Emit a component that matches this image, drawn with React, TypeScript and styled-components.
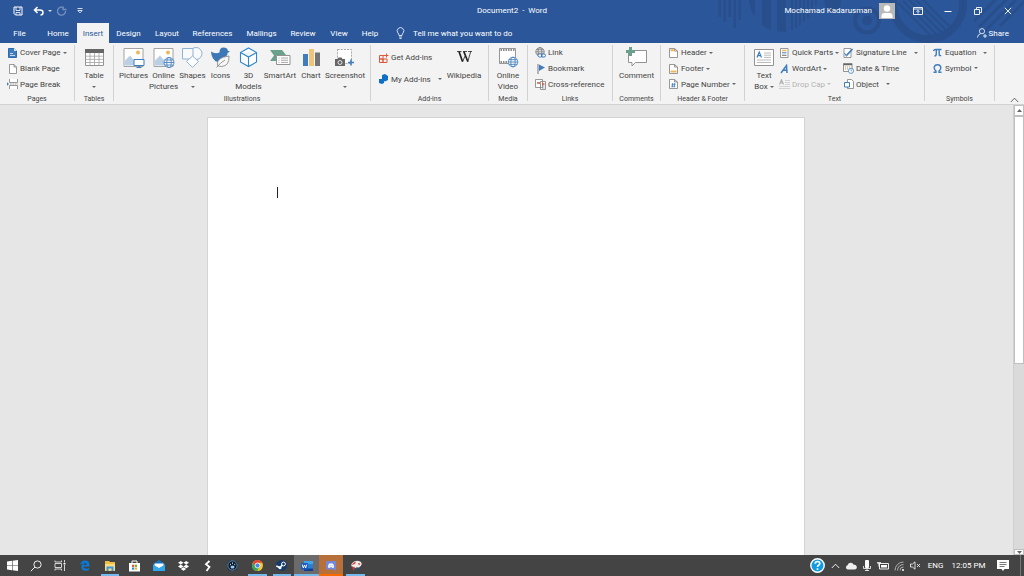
import React from "react";
import styled, { createGlobalStyle } from "styled-components";

const Global = createGlobalStyle`
  * { box-sizing: border-box; }
  body { margin: 0; background: #e6e6e6; }
  body, button, input { font-family: Roboto, "Open Sans", sans-serif; font-size: 8px; line-height: 11px; }
  button { border: 0; padding: 0; margin: 0; background: none; color: inherit; cursor: pointer; white-space: nowrap; }
  svg { display: block; flex: none; }
`;

const Window = styled.div`
  height: 100vh;
  display: flex;
  flex-direction: column;
  overflow: hidden;
  color: #444;
`;

/* ---------- Header ---------- */
const Header = styled.header`
  position: relative;
  flex: none;
  background: #2b579a;
  color: #fff;
`;
const Decoration = styled.svg`
  position: absolute;
  top: 0;
  right: 0;
`;
const TitleBar = styled.div`
  position: relative;
  height: 23px;
  padding-bottom: 2px;
  display: grid;
  grid-template-columns: 1fr auto 1fr;
  align-items: center;
`;
const QuickAccess = styled.div`
  display: flex;
  align-items: center;
  padding-left: 8px;
`;
const QuickButton = styled.button<{ $w: number; $dim?: boolean }>`
  width: ${(p) => p.$w}px;
  height: 20px;
  display: flex;
  align-items: center;
  justify-content: center;
  opacity: ${(p) => (p.$dim ? 0.35 : 1)};
`;
const Title = styled.h1`
  margin: 0;
  font-size: 8px;
  font-weight: 400;
  line-height: 11px;
  white-space: pre;
`;
const WindowTools = styled.div`
  display: flex;
  align-items: center;
  justify-content: flex-end;
  padding-right: 1px;
`;
const Account = styled.button`
  display: flex;
  align-items: center;
  gap: 7px;
  margin-right: 8px;
`;
const WindowButton = styled.button`
  width: 30px;
  height: 20px;
  display: flex;
  align-items: center;
  justify-content: center;
`;
const TabRow = styled.nav`
  position: relative;
  height: 20px;
  display: flex;
  align-items: stretch;
`;
const Tab = styled.button<{ $w: number; $active?: boolean }>`
  width: ${(p) => p.$w}px;
  background: ${(p) => (p.$active ? "#f3f3f3" : "transparent")};
  color: ${(p) => (p.$active ? "#2b579a" : "#fff")};
`;
const TellMe = styled.label`
  flex: 1;
  display: flex;
  align-items: center;
  gap: 8px;
  padding-left: 12px;
`;
const TellMeInput = styled.input`
  width: 140px;
  border: 0;
  padding: 0;
  background: transparent;
  color: #fff;
  outline: none;
  &::placeholder { color: #fff; opacity: 1; }
`;
const Share = styled.button`
  display: flex;
  align-items: center;
  gap: 2px;
  padding-right: 15px;
`;

/* ---------- Ribbon ---------- */
const Ribbon = styled.section`
  flex: none;
  height: 62px;
  display: flex;
  align-items: stretch;
  background: #f3f3f3;
  border-bottom: 1px solid #d2d2d2;
`;
const Group = styled.div<{ $w: number; $pad?: number }>`
  width: ${(p) => p.$w}px;
  flex: none;
  margin: 2px 0 3px;
  padding-left: ${(p) => p.$pad ?? 0}px;
  border-right: 1px solid #d2d2d2;
  display: flex;
  flex-direction: column;
  justify-content: space-between;
`;
const GroupBody = styled.div`
  height: 47px;
  display: flex;
`;
const GroupLabel = styled.div<{ $pad?: number }>`
  margin: 0 0 -3px -${(p) => p.$pad ?? 0}px;
  text-align: center;
  font-size: 7px;
  line-height: 9px;
`;
const BigButton = styled.button<{ $w: number }>`
  width: ${(p) => p.$w}px;
  display: flex;
  flex-direction: column;
  align-items: center;
  justify-content: flex-start;
  padding-top: 2px;
`;
const BigIcon = styled.span`
  flex: none;
  height: 23px;
  display: flex;
  align-items: flex-start;
`;
const BigText = styled.span`
  flex: none;
  text-align: center;
  display: flex;
  align-items: center;
  gap: 2px;
  height: 11px;
`;
const Column = styled.div<{ $w?: number; $inset?: number }>`
  width: ${(p) => (p.$w ? p.$w + "px" : "auto")};
  padding: ${(p) => p.$inset ?? 0}px 0;
  display: flex;
  flex-direction: column;
`;
const SmallButton = styled.button`
  flex: 1;
  display: flex;
  align-items: center;
  gap: 2px;
  &:disabled { color: #b4b4b4; }
`;
const SmallIcon = styled.span`
  width: 11px;
  display: flex;
  justify-content: center;
`;
const Arrow = styled.span<{ $far?: boolean }>`
  width: 0;
  height: 0;
  margin-left: ${(p) => (p.$far ? 5 : 0)}px;
  border: 2px solid transparent;
  border-top-color: currentColor;
  border-bottom: 0;
  opacity: 0.8;
`;
const Collapse = styled.button`
  margin-left: auto;
  align-self: flex-end;
  padding: 0 5px 1px 0;
`;

/* ---------- Document ---------- */
const Workspace = styled.main`
  flex: 1;
  min-height: 0;
  display: flex;
  background: #e6e6e6;
`;
const Canvas = styled.div`
  flex: 1;
  display: flex;
  justify-content: center;
  padding: 12px 1px 0 0;
`;
const Page = styled.article`
  width: 59%;
  background: #fff;
  border: 1px solid #d4d4d4;
  border-bottom: 0;
  padding: 69px;
`;
const Caret = styled.span`
  display: block;
  width: 1px;
  height: 11px;
  background: #222;
`;
const ScrollBar = styled.div`
  width: 11px;
  display: flex;
  flex-direction: column;
  background: #dadada;
  border-left: 1px solid #cfcfcf;
  overflow: hidden;
`;
const ScrollButton = styled.button<{ $down?: boolean }>`
  height: ${(p) => (p.$down ? 6 : 11)}px;
  flex: none;
  margin-top: ${(p) => (p.$down ? "auto" : 0)};
  background: #fff;
  border: 1px solid #c0c0c0;
  display: flex;
  justify-content: center;
  align-items: center;
`;
const Thumb = styled.div`
  height: 55%;
  background: #fff;
  border: 1px solid #c0c0c0;
`;

/* ---------- Taskbar ---------- */
const TaskBar = styled.footer`
  flex: none;
  height: 21px;
  display: flex;
  align-items: stretch;
  background: #444;
  color: #fff;
`;
const TaskButton = styled.button<{ $open?: boolean; $bg?: string; $line?: string }>`
  width: 24px;
  display: flex;
  align-items: center;
  justify-content: center;
  background: ${(p) => p.$bg ?? "transparent"};
  position: relative;
  &::after {
    content: "";
    display: ${(p) => (p.$open ? "block" : "none")};
    position: absolute;
    bottom: 0;
    left: ${(p) => (p.$bg ? 0 : 3)}px;
    right: ${(p) => (p.$bg ? 0 : 3)}px;
    height: 2px;
    background: ${(p) => p.$line ?? "#76b9ed"};
  }
`;
const Pinned = styled.div`
  width: 295px;
  margin-left: 1px;
  display: grid;
  grid-template-columns: repeat(12, 1fr);
  & > button { width: auto; }
`;
const Tray = styled.div`
  margin-left: auto;
  display: flex;
  align-items: center;
`;
const TrayButton = styled.button<{ $w?: number }>`
  width: ${(p) => p.$w ?? 16}px;
  height: 21px;
  display: flex;
  align-items: center;
  justify-content: center;
`;
const HelpButton = styled(TrayButton)`
  margin-right: 1px;
`;
const ShowDesktop = styled.button`
  width: 4px;
  height: 21px;
  margin-left: 4px;
  border-left: 1px solid #777;
`;

/* ---------- Icons ---------- */
const Svg = ({ w, h, children }: { w: number; h: number; children: React.ReactNode }) => (
  <svg width={w} height={h} viewBox={`0 0 ${w} ${h}`} fill="none" aria-hidden="true">{children}</svg>
);
const blue = "#3f7dbd";
const grey = "#7f7f7f";

const HeaderArt = () => (
  <Decoration width="312" height="43" viewBox="712 0 312 43" fill="none" aria-hidden="true">
    <g fill="#284f8b">
      <path d="M718.500 0h2.500v17h-2.500zM723.500 0h2.500v22h-2.500zM728.500 0h2.500v17h-2.500zM733.500 0h2.500v28h-2.500zM738.500 0h2.500v20h-2.500z" />
      <path d="M749 0h6v17q-5-7-6-17zM762 0h9v30q-5-1-9-6zM777 0h9v32q-5 0-9-1zM791 0h2v30h-2zM795 0h2v28h-2zM799 0h2v25h-2zM803 0h2v22h-2zM807 0h2v18h-2zM811 0h2v12h-2zM815 0h2v6h-2z" />
      <circle cx="867" cy="20.500" r="5" />
      <path d="M824 0h17v4q-2 8-9 8t-8-12z" />
    </g>
    <g stroke="#284f8b">
      <circle cx="867" cy="20.500" r="12" strokeWidth="4" />
      <circle cx="928" cy="4" r="35" strokeWidth="8" />
      <path d="M898 3l34 34M903 1l34 34M908-1l34 34M914-2l32 32M921-2l28 28" strokeWidth="2" />
      <path d="M974 21l22-22M979 27l28-28M984 32l33-33M1000 26l27-27" strokeWidth="3" />
    </g>
  </Decoration>
);
const SaveIcon = () => <Svg w={10} h={10}><path d="M1 1h8v8H2.500L1 7.500z" stroke="#fff" /><path d="M3 1v3.500h4V1M3 9V6.500h4V9" stroke="#fff" strokeWidth=".8" /></Svg>;
const UndoIcon = () => <Svg w={11} h={10}><path d="M4.500 1L1.500 4l3 3M2 4h5q3 0 3 2.500T7.500 9" stroke="#fff" strokeWidth="1.500" /></Svg>;
const RedoIcon = () => <Svg w={10} h={10}><path d="M7 2a4 4 0 101.500 3M6 .500v3h3.500" stroke="#fff" strokeWidth="1.300" /></Svg>;
const CustomizeIcon = () => <Svg w={6} h={6}><path d="M.500.500h5M.800 2.500h4.400L3 4.800z" stroke="#fff" strokeWidth=".8" /></Svg>;
const Avatar = () => (
  <Svg w={16} h={16}>
    <path d="M0 0h16v16H0z" fill="#b9b9b9" />
    <circle cx="8" cy="5.500" r="3.200" fill="#fff" />
    <path d="M2.500 15v-2q0-3 3-3h5q3 0 3 3v2z" fill="#fff" />
  </Svg>
);
const DisplayIcon = () => <Svg w={10} h={8}><path d="M.500.500h9v7h-9zM.500 2h9M5 6.500v-3M3.500 4.800L5 3.300l1.500 1.500" stroke="#fff" strokeWidth=".9" /></Svg>;
const MinIcon = () => <Svg w={8} h={8}><path d="M.500 4.500h7" stroke="#fff" /></Svg>;
const RestoreIcon = () => <Svg w={8} h={8}><path d="M.500 2.500h5v5h-5zM2.500 2V.500h5v5H6" stroke="#fff" strokeWidth=".9" /></Svg>;
const CloseIcon = () => <Svg w={8} h={8}><path d="M.800.800l6.400 6.400M7.200.800L.800 7.200" stroke="#fff" strokeWidth=".9" /></Svg>;
const BulbIcon = () => <Svg w={9} h={12}><path d="M3 8.500Q3 7 1.800 5.800a3.300 3.300 0 115.400 0Q6 7 6 8.500zM3 10h3M3.500 11.500h2" stroke="#fff" strokeWidth=".8" /></Svg>;
const ShareIcon = () => <Svg w={10} h={10}><circle cx="5" cy="3.200" r="2.600" stroke="#fff" strokeWidth=".8" /><path d="M.500 9.500q0-3 3-3.800M6 8h4M8 6v4" stroke="#fff" strokeWidth=".8" /></Svg>;

const CoverIcon = () => <Svg w={9} h={10}><path d="M.500.500h5.500l2.500 2.500v6.500h-8z" fill={blue} stroke="#2b6cae" /><path d="M6 0v3h3z" fill="#d6e4f2" /><path d="M2 5.500h3M2 7.500h5" stroke="#fff" strokeWidth=".7" /></Svg>;
const BlankIcon = () => <Svg w={8} h={10}><path d="M.500.500h4.500l2.500 2.500v6.500h-7zM5 .500v2.500h2.500" fill="#fff" stroke={grey} strokeWidth=".8" /></Svg>;
const BreakIcon = () => <Svg w={11} h={10}><path d="M2.500 0v3.500h8V0M2.500 10V6.500h8V10" fill="#fff" stroke={grey} strokeWidth=".8" /><path d="M0 3.200L2 5 0 6.800z" fill={blue} /><path d="M3 5h8" stroke={grey} strokeDasharray="1.500 1" strokeWidth=".7" /></Svg>;
const TableIcon = () => <Svg w={19} h={20}><path d="M.500 2.500h18v16H.500z" fill="#fff" stroke="#929292" /><path d="M0 2h19v4H0z" fill="#666" /><path d="M5 6v12.500M9.500 6v12.500M14 6v12.500M.500 9.200h18M.500 12.400h18M.500 15.500h18" stroke="#a2a2a2" strokeWidth=".8" /></Svg>;
const Photo = () => <><path d="M1 1.500h19v18H1z" fill="#fff" stroke="#a2a2a2" /><path d="M2 18.500v-5l5-5 6 7v3z" fill="#b9cfe5" /><circle cx="15" cy="5.500" r="2" fill="#ecb85c" /></>;
const PicturesIcon = () => <Svg w={22} h={21}><Photo /><path d="M11 12.500h10v6H11z" fill="#fff" stroke={blue} /><path d="M13.500 20.500h5M16 18.500v2" stroke={blue} /></Svg>;
const Globe = ({ x, y, r, c = blue }: { x: number; y: number; r: number; c?: string }) => (
  <g transform={`translate(${x} ${y})`} stroke={c} strokeWidth=".8"><circle r={r} fill="#f3f3f3" /><ellipse rx={r * 0.45} ry={r} /><path d={`M${-r} 0H${r}M${-r * 0.85} ${-r * 0.5}H${r * 0.85}M${-r * 0.85} ${r * 0.5}H${r * 0.85}`} /></g>
);
const OnlineIcon = () => <Svg w={22} h={21}><Photo /><Globe x={16} y={15.5} r={5} /></Svg>;
const ShapesIcon = () => <Svg w={21} h={21}><circle cx="14" cy="6.500" r="6" fill="#f8fafc" stroke="#8fb1d6" /><path d="M.500 1.500h10.500v10.500H.500z" fill="#f8fafc" stroke="#8fb1d6" /><path d="M10.500 9l6 5.500-6 5.800-6-5.800z" fill="#fff" stroke="#8fb1d6" /></Svg>;
const DuckIcon = () => <Svg w={19} h={21}><path d="M0 4.500Q4 7.500 8.500 5.500 8.500.500 12.500.500q4 0 4.300 3.300L19 4.500l-2.500 1.500Q17 8 14.500 9.500 8 11 6.500 15 .500 13 0 4.500z" fill="#3b78b5" /><path d="M6.500 18.500Q5 10.500 18 9q.5 10-7.500 10.500-2 0-4-1zM5.500 20.500q4-5 8.500-7.500" fill="#f8f8f8" stroke={grey} strokeWidth=".8" /></Svg>;
const CubeIcon = () => <Svg w={19} h={21}><path d="M9.500 1l8 4.500v9.500l-8 4.500-8-4.500V5.500zM1.500 5.500l8 4.500 8-4.500M9.500 10v9.500" fill="#fff" stroke="#2b87cf" strokeWidth="1.100" /></Svg>;
const SmartIcon = () => <Svg w={21} h={20}><path d="M0 3h12l4 5-4 6H0l4-5.500z" fill="#6aa18c" /><path d="M6.500 8.500h13.500v9H6.500z" fill="#fff" stroke="#929292" /><path d="M8.500 11h1M11 11h7M8.500 13.200h1M11 13.200h7M8.500 15.400h1M11 15.400h7" stroke="#929292" strokeWidth=".8" /></Svg>;
const ChartIcon = () => <Svg w={17} h={20}><path d="M0 7h5v12H0z" fill={blue} /><path d="M6 2h5v17H6z" fill="#ebc67a" /><path d="M12 5.500h5V19h-5z" fill="#737373" /></Svg>;
const ScreenshotIcon = () => <Svg w={20} h={21}><path d="M2.500 2.500h14v14h-14z" fill="#fff" stroke="#929292" strokeDasharray="2 1.200" strokeWidth=".8" /><path d="M0 12h2.500l1-1.500h3L7.500 12H10v7H0z" fill="#666" /><circle cx="5" cy="15.500" r="2" stroke="#fff" strokeWidth=".8" /><path d="M13 15.500h6M16 12.500v6" stroke={blue} strokeWidth="1.600" /></Svg>;
const GetIcon = () => <Svg w={10} h={10}><path d="M.500 2.500h3.500v3.500H.500zM.500 6h3.500v3.500H.500zM4 6h4v3.500H4zM4 2.500h2M7.500.500v4M5.500 2.500h4" stroke="#e0593a" strokeWidth="1" /></Svg>;
const MyIcon = () => <Svg w={10} h={10}><path d="M3 1l3-1 3 2v4L6 7.500 3 6z" fill="#0f6fc6" /><path d="M0 5h4l1 1.500V9L3 10 0 9z" fill="#0f6fc6" /></Svg>;
const VideoIcon = () => <Svg w={21} h={21}><path d="M1.500 1.500h16v15h-16z" fill="#fff" stroke={grey} strokeWidth=".8" /><path d="M2.500 3h14M2.500 15h8" stroke="#666" strokeWidth="1.500" strokeDasharray="1.500 1" /><Globe x={15} y={15} r={4.8} /></Svg>;
const LinkIcon = () => <Svg w={11} h={11}><Globe x={5} y={4.800} r={4.2} c="#777" /><path d="M3 8.500q0-1.500 1.500-1.500h2v3h-2Q3 10 3 8.500zM10.500 8.500q0-1.500-1.500-1.500H7v3h2q1.500 0 1.500-1.500z" fill="#fff" stroke={blue} /></Svg>;
const BookmarkIcon = () => <Svg w={10} h={10}><path d="M2 0v10" stroke="#777" /><path d="M3 .500l6 3-6 3.500z" fill={blue} /></Svg>;
const CrossIcon = () => <Svg w={11} h={11}><path d="M.500.500h7v8h-7zM5.500 2.500h5v8h-5z" fill="#fff" stroke={grey} strokeWidth=".8" /><path d="M2 4h3M7 5h2.500" stroke="#d45137" strokeWidth="1.300" /><path d="M7 7h2.500M7 9h2.500" stroke={grey} strokeWidth=".7" /></Svg>;
const CommentIcon = () => <Svg w={22} h={21}><path d="M2.500 3.500h18v12h-11L6 19v-3.500H2.500z" fill="#fff" stroke="#929292" /><path d="M0 4.500h9M4.500 0v9" stroke="#6aa18c" strokeWidth="3" /></Svg>;
const PageIcon = ({ kind }: { kind: "top" | "bottom" | "num" }) => (
  <Svg w={9} h={10}><path d="M.500.500h5l3 2.500v6.500h-8zM5.500.500v2.500h3" fill="#fff" stroke={grey} strokeWidth=".8" />
    {kind === "top" && <path d="M1.500 1.200h4v2h-4z" fill="#ecb85c" />}
    {kind === "bottom" && <path d="M1.500 6.500h6v2h-6z" fill="#ecb85c" />}
    {kind === "num" && <path d="M3.700 4l-.5 4.500M5.700 4l-.5 4.500M2.500 5.300h4M2.300 7.200h4" stroke={blue} strokeWidth=".8" />}
  </Svg>
);
const TextBoxIcon = () => <Svg w={20} h={20}><path d="M.500 2.500h19v16H.500z" fill="#fff" stroke="#929292" /><path d="M3 10.500L5.200 5l2.300 5.500M3.800 8.700h3" stroke={blue} strokeWidth="1.200" /><path d="M10 6h7M10 8.200h7M10 10.400h7M3 13h14M3 15.500h14" stroke="#aaa" strokeWidth=".8" /></Svg>;
const QuickIcon = () => <Svg w={9} h={10}><path d="M.500.500h7.500v9H.500z" fill="#fff" stroke={grey} strokeWidth=".8" /><path d="M2 2.500h4.500" stroke="#ecb85c" strokeWidth="1.500" /><path d="M2 4.800h4.500" stroke={blue} /><path d="M2 7.300h4.500" stroke={grey} strokeWidth="1.200" /></Svg>;
const WordArtIcon = () => <Svg w={9} h={10}><path d="M1 9L6.500 1.500 7 9M3 6.200h4" stroke={blue} strokeWidth="1.500" /></Svg>;
const DropIcon = () => <Svg w={11} h={10}><path d="M.500 5.500L2.500.800l2 4.700M1.200 4h2.600" stroke="#b0b0b0" strokeWidth="1.100" /><path d="M6 1.500h5M6 3.500h5M6 5.500h5M0 7.500h11M0 9.500h11" stroke="#c4c4c4" strokeWidth=".7" /></Svg>;
const SignIcon = () => <Svg w={11} h={10}><path d="M1 .500h7v9H1z" fill="#fff" stroke={grey} strokeWidth=".8" /><path d="M3.500 7.500L9.500 1" stroke={blue} strokeWidth="1.800" /><path d="M1.500 5l2 3.500" stroke={blue} /></Svg>;
const DateIcon = () => <Svg w={11} h={11}><path d="M.500.500h8.500v8H.500z" fill="#fff" stroke="#777" strokeWidth=".8" /><path d="M.500 1.500h8.500" stroke="#666" strokeWidth="1.500" /><path d="M2 4h5.500M2 6h4" stroke="#d9804a" strokeDasharray="1 1" strokeWidth="1.200" /><circle cx="8" cy="7.800" r="2.600" fill="#fff" stroke={blue} strokeWidth=".8" /><path d="M8 6.300v1.500h1.200" stroke={blue} strokeWidth=".7" /></Svg>;
const ObjectIcon = () => <Svg w={10} h={10}><path d="M3.500.500h4l2 2v7h-6z" fill="#fff" stroke={grey} strokeWidth=".8" /><path d="M.500 3.500h5v4.500h-5z" fill="#fff" stroke={blue} /></Svg>;
const PiIcon = () => <Svg w={9} h={9}><path d="M.500 3Q1 1.500 2.500 1.500H8.500M3.300 2v3.500Q3.300 8 1.500 8M6.200 2v5q0 1 2 .500" stroke={blue} strokeWidth="1.400" /></Svg>;
const OmegaIcon = () => <Svg w={9} h={9}><path d="M.500 8.200H3V7Q1.200 5.500 1.200 4a3.300 3.300 0 016.600 0Q7.800 5.500 6 7v1.200h2.500" stroke={blue} strokeWidth="1.400" /></Svg>;
const WIcon = () => <Svg w={15} h={16}><path d="M0 4.500h4.500M6 4.500h4M11 4.500h4" stroke="#222" strokeWidth=".8" /><path d="M2 4.500l3.500 10M6.800 4.500l4 10" stroke="#222" strokeWidth="1.700" /><path d="M5.500 15L8 9M10.700 15l3-10.500" stroke="#222" strokeWidth=".8" /></Svg>;

const WindowsIcon = () => <Svg w={11} h={11}><path d="M0 1.500L5 .800v4.400H0zM5.600.700L11 0v5.200H5.600zM0 5.800h5v4.400l-5-.7zM5.600 5.800H11V11l-5.400-.7z" fill="#fff" /></Svg>;
const SearchIcon = () => <Svg w={12} h={12}><circle cx="7.500" cy="4.500" r="3.600" stroke="#fff" strokeWidth=".9" /><path d="M5 7L.800 11.200" stroke="#fff" strokeWidth=".9" /></Svg>;
const TaskViewIcon = () => <Svg w={12} h={11}><path d="M1 .500v1.500h6.500V.500M1 10.500V9h6.500v1.500M1 3.500h6.500v4H1zM10.500 0v2.500M10.500 5v6" stroke="#e2e2e2" strokeWidth=".9" /><path d="M9.500 3h2v1.500h-2z" fill="#fff" /></Svg>;
const EdgeIcon = () => <Svg w={10} h={11}><path fillRule="evenodd" d="M.300 5.200Q.800.500 5 .500q4.500 0 4.500 5V6.500H3.300q.3 2.200 3 2.200 1.500 0 2.700-.7v2q-1.500.8-3.500.8-4-.1-4.200-3.800Q1.300 4.800 3.700 3.400 1.500 3.600.300 5.200zM3.500 4.900h3.300q0-1.900-1.500-1.900T3.500 4.900z" fill="#0a7ad8" /></Svg>;
const FolderIcon = () => <Svg w={12} h={11}><path d="M1 1h4l1 1h5v9H1z" fill="#f0bd45" /><path d="M1 4h10v6.500H1z" fill="#fbdc84" /><path d="M2.500 11V6.500h7V11h-2V8.500h-3V11z" fill="#3c96dc" /></Svg>;
const StoreIcon = () => <Svg w={11} h={12}><path d="M3 3V1h5v2" stroke="#fff" /><path d="M0 3h11v8.500H0z" fill="#fff" /><path d="M3 4.700h2.200v2.200H3z" fill="#e5512f" /><path d="M5.800 4.700H8v2.200H5.800z" fill="#6fae2f" /><path d="M3 7.500h2.200v2.200H3z" fill="#2b8fd8" /><path d="M5.800 7.500H8v2.200H5.800z" fill="#f0b323" /></Svg>;
const MailIcon = () => <Svg w={12} h={11}><path d="M0 4l6-4 6 4v7H0z" fill="#1673c4" /><path d="M1.500 3.500h9V6L6 8.500 1.500 6z" fill="#fff" /><path d="M0 4.500L6 8l6-3.500V11H0z" fill="#34a6ec" /></Svg>;
const DropboxIcon = () => <Svg w={11} h={10}><path d="M2.800 0L5.500 1.800 2.800 3.600 0 1.800zM8.200 0L11 1.800 8.200 3.600 5.500 1.800zM2.800 3.600L5.500 5.400 2.800 7.200 0 5.400zM8.200 3.600L11 5.400 8.200 7.200 5.500 5.400zM5.500 6.200l2.700 1.800-2.700 1.800L2.800 8z" fill="#fff" /></Svg>;
const BoltIcon = () => <Svg w={8} h={12}><path d="M5.500 1L2 4.200 5.500 7 2.500 11" stroke="#fff" strokeWidth="1.800" /></Svg>;
const PawIcon = () => <Svg w={11} h={11}><circle cx="5.500" cy="5.500" r="5.500" fill="#101722" /><circle cx="5.500" cy="5.500" r="4.700" stroke="#5d9dcc" strokeWidth="1" /><ellipse cx="5.500" cy="7" rx="2" ry="1.500" fill="#9ccbeb" /><path d="M3 4.500h1M5 3.300h1M7.200 4.500h1" stroke="#9ccbeb" strokeWidth="1.400" /></Svg>;
const ChromeIcon = () => <Svg w={11} h={11}><circle cx="5.500" cy="5.500" r="5.500" fill="#f5c62b" /><path d="M.700 2.800a5.500 5.500 0 019.600 0H5.500L3.300 7z" fill="#e04434" /><path d="M.700 2.800a5.500 5.500 0 004.500 8.200L7.500 7h-4z" fill="#35a354" /><circle cx="5.500" cy="5.500" r="2.500" fill="#4688ee" stroke="#fff" strokeWidth=".8" /></Svg>;
const SteamIcon = () => <Svg w={11} h={11}><circle cx="5.500" cy="5.500" r="5.500" fill="#173b6a" /><circle cx="7.500" cy="4" r="1.900" fill="#173b6a" stroke="#fff" /><path d="M.300 6l3.500 1.500L6.500 5" stroke="#fff" strokeWidth="1.500" /><circle cx="4" cy="7.800" r="1.500" fill="#fff" /></Svg>;
const WordIcon = () => <Svg w={12} h={10}><path d="M3 0h9v10H3z" fill="#2b7cd3" /><path d="M3 0h9v3H3z" fill="#41a5ee" /><path d="M3 7.500h9V10H3z" fill="#103f91" /><path d="M0 2h7v6.500H0z" fill="#185abd" /><path d="M1.300 3.500l1 3.500 1.200-3 1.200 3 1-3.500" stroke="#fff" strokeWidth=".9" /></Svg>;
const DiscordIcon = () => <Svg w={10} h={10}><path d="M1 0h8q1 0 1 1v9L8 8.500H1q-1 0-1-1V1q0-1 1-1z" fill="#7289da" /><path d="M2 6.500Q2 3 3.300 2.500h3.400Q8 3 8 6.500l-1.500.500-.5-.7H4l-.5.700z" fill="#fff" /><path d="M3.700 4.800h.8M5.600 4.800h.8" stroke="#7289da" /></Svg>;
const BallIcon = () => <Svg w={12} h={12}><ellipse cx="6.500" cy="4.500" rx="5.300" ry="3.500" transform="rotate(-15 6.500 4.500)" fill="#efeaea" /><path d="M1.500 5Q3 2 6 1.500L5 4zM8 3l2.500.500L9 5.500z" fill="#d64538" /><path d="M1.500 6l3.500 1.500L3.500 11z" fill="#bb3b34" /><circle cx="7" cy="9" r="1.800" fill="#2c4d74" /></Svg>;
const HelpIcon = () => <Svg w={15} h={15}><circle cx="7.500" cy="7.500" r="6.700" fill="#119be0" stroke="#fff" strokeWidth="1.400" /><path d="M5.200 5.800Q5.200 3.500 7.500 3.500t2.300 2Q9.800 6.700 8.500 7.300 7.500 7.800 7.500 9M7.500 10.200v1.700" stroke="#fff" strokeWidth="1.600" /></Svg>;
const UpIcon = ({ c = "#fff" }: { c?: string }) => <Svg w={9} h={6}><path d="M.800 5L4.500 1.200 8.200 5" stroke={c} strokeWidth=".9" /></Svg>;
const CloudIcon = () => <Svg w={12} h={8}><path d="M2.500 7.500a2.200 2.200 0 010-4.200A3.300 3.300 0 018.700 2.800 2.400 2.400 0 0110 7.500z" fill="#eee" /></Svg>;
const MicIcon = () => <Svg w={8} h={11}><rect x="2" width="4" height="8" rx="1" fill="#fff" /><path d="M.500 6v2.500h7V6M4 8.500V11M2 10.500h4" stroke="#fff" strokeWidth=".8" /></Svg>;
const BatteryIcon = () => <Svg w={12} h={8}><path d="M2.500 1.500h9v5.500h-9z" stroke="#fff" strokeWidth=".9" /><path d="M4 3h6v2.500H4z" fill="#fff" /><path d="M0 1h4M1 0v1M3 0v1M2 1v3.500" stroke="#fff" /></Svg>;
const WifiIcon = () => <Svg w={11} h={10}><path d="M1 9.500A8.500 8.500 0 019.500 1M3.500 9.500a6 6 0 016-6M6 9.500a3.500 3.500 0 013.500-3.500" stroke="#bbb" strokeWidth=".9" /><circle cx="9" cy="9" r="1" fill="#fff" /></Svg>;
const VolumeIcon = () => <Svg w={11} h={9}><path d="M.500 3h2L5 .800v7.400L2.500 6h-2zM7 3l3 3M10 3L7 6" stroke="#fff" strokeWidth=".8" /></Svg>;
const NoticeIcon = () => <Svg w={12} h={11}><path d="M0 0h12v9H7.500L6 11 4.500 9H0z" fill="#fff" /><path d="M2.500 2.500h7M2.500 4.500h7M2.500 6.500h5" stroke="#555" strokeWidth=".8" /></Svg>;

/* ---------- Composition ---------- */
const Big = ({ w, icon, lines, arrow }: { w: number; icon: React.ReactNode; lines: string[]; arrow?: "below" | "inline" }) => (
  <BigButton $w={w}>
    <BigIcon>{icon}</BigIcon>
    {lines.map((l, i) => (
      <BigText key={l}>{l}{arrow === "inline" && i === lines.length - 1 && <Arrow />}</BigText>
    ))}
    {arrow === "below" && <BigText><Arrow /></BigText>}
  </BigButton>
);
const Small = ({ icon, text, arrow, far, disabled }: { icon: React.ReactNode; text: string; arrow?: boolean; far?: boolean; disabled?: boolean }) => (
  <SmallButton disabled={disabled}>
    <SmallIcon>{icon}</SmallIcon>{text}{arrow && <Arrow $far={far} />}
  </SmallButton>
);
const RibbonGroup = ({ w, pad, label, children }: { w: number; pad?: number; label: string; children: React.ReactNode }) => (
  <Group $w={w} $pad={pad} role="group" aria-label={label}>
    <GroupBody>{children}</GroupBody>
    <GroupLabel $pad={pad}>{label}</GroupLabel>
  </Group>
);

const tabs: [string, number][] = [
  ["File", 39], ["Home", 38], ["Insert", 32], ["Design", 39], ["Layout", 38], ["References", 53],
  ["Mailings", 45], ["Review", 38], ["View", 34], ["Help", 28],
];

export default function App() {
  return (
    <Window>
      <Global />
      <Header>
        <HeaderArt />
        <TitleBar>
          <QuickAccess>
            <QuickButton $w={20} aria-label="Save"><SaveIcon /></QuickButton>
            <QuickButton $w={20} aria-label="Undo"><UndoIcon /></QuickButton>
            <QuickButton $w={4} aria-label="Undo history"><Arrow /></QuickButton>
            <QuickButton $w={20} $dim aria-label="Repeat"><RedoIcon /></QuickButton>
            <QuickButton $w={16} aria-label="Customize Quick Access Toolbar"><CustomizeIcon /></QuickButton>
          </QuickAccess>
          <Title>{"Document2  -  Word"}</Title>
          <WindowTools>
            <Account>Mochamad Kadarusman<Avatar /></Account>
            <WindowButton aria-label="Ribbon display options"><DisplayIcon /></WindowButton>
            <WindowButton aria-label="Minimize"><MinIcon /></WindowButton>
            <WindowButton aria-label="Restore"><RestoreIcon /></WindowButton>
            <WindowButton aria-label="Close"><CloseIcon /></WindowButton>
          </WindowTools>
        </TitleBar>
        <TabRow>
          {tabs.map(([name, w]) => <Tab key={name} $w={w} $active={name === "Insert"}>{name}</Tab>)}
          <TellMe>
            <BulbIcon />
            <TellMeInput placeholder="Tell me what you want to do" aria-label="Tell me what you want to do" />
          </TellMe>
          <Share><ShareIcon />Share</Share>
        </TabRow>
      </Header>

      <Ribbon>
        <RibbonGroup w={75} pad={7} label="Pages">
          <Column>
            <Small icon={<CoverIcon />} text="Cover Page" arrow />
            <Small icon={<BlankIcon />} text="Blank Page" />
            <Small icon={<BreakIcon />} text="Page Break" />
          </Column>
        </RibbonGroup>
        <RibbonGroup w={39} pad={4} label="Tables">
          <Big w={30} icon={<TableIcon />} lines={["Table"]} arrow="below" />
        </RibbonGroup>
        <RibbonGroup w={257} pad={4} label="Illustrations">
          <Big w={31} icon={<PicturesIcon />} lines={["Pictures"]} />
          <Big w={29} icon={<OnlineIcon />} lines={["Online", "Pictures"]} />
          <Big w={29} icon={<ShapesIcon />} lines={["Shapes"]} arrow="below" />
          <Big w={27} icon={<DuckIcon />} lines={["Icons"]} />
          <Big w={29} icon={<CubeIcon />} lines={["3D", "Models"]} />
          <Big w={34} icon={<SmartIcon />} lines={["SmartArt"]} />
          <Big w={28} icon={<ChartIcon />} lines={["Chart"]} />
          <Big w={40} icon={<ScreenshotIcon />} lines={["Screenshot"]} arrow="below" />
        </RibbonGroup>
        <RibbonGroup w={118} pad={7} label="Add-ins">
          <Column $w={67} $inset={2}>
            <Small icon={<GetIcon />} text="Get Add-ins" />
            <Small icon={<MyIcon />} text="My Add-ins" arrow far />
          </Column>
          <Big w={38} icon={<WIcon />} lines={["Wikipedia"]} />
        </RibbonGroup>
        <RibbonGroup w={39} pad={4} label="Media">
          <Big w={30} icon={<VideoIcon />} lines={["Online", "Video"]} />
        </RibbonGroup>
        <RibbonGroup w={85} pad={7} label="Links">
          <Column>
            <Small icon={<LinkIcon />} text="Link" />
            <Small icon={<BookmarkIcon />} text="Bookmark" />
            <Small icon={<CrossIcon />} text="Cross-reference" />
          </Column>
        </RibbonGroup>
        <RibbonGroup w={48} pad={4} label="Comments">
          <Big w={39} icon={<CommentIcon />} lines={["Comment"]} />
        </RibbonGroup>
        <RibbonGroup w={84} pad={7} label="Header & Footer">
          <Column>
            <Small icon={<PageIcon kind="top" />} text="Header" arrow />
            <Small icon={<PageIcon kind="bottom" />} text="Footer" arrow />
            <Small icon={<PageIcon kind="num" />} text="Page Number" arrow />
          </Column>
        </RibbonGroup>
        <RibbonGroup w={180} pad={4} label="Text">
          <Big w={30} icon={<TextBoxIcon />} lines={["Text", "Box"]} arrow="inline" />
          <Column $w={64}>
            <Small icon={<QuickIcon />} text="Quick Parts" arrow />
            <Small icon={<WordArtIcon />} text="WordArt" arrow />
            <Small icon={<DropIcon />} text="Drop Cap" arrow disabled />
          </Column>
          <Column>
            <Small icon={<SignIcon />} text="Signature Line" arrow far />
            <Small icon={<DateIcon />} text="Date & Time" />
            <Small icon={<ObjectIcon />} text="Object" arrow far />
          </Column>
        </RibbonGroup>
        <RibbonGroup w={70} pad={7} label="Symbols">
          <Column>
            <Small icon={<PiIcon />} text="Equation" arrow far />
            <Small icon={<OmegaIcon />} text="Symbol" arrow />
            <Column $inset={8} />
          </Column>
        </RibbonGroup>
        <Collapse aria-label="Collapse the ribbon"><UpIcon c="#555" /></Collapse>
      </Ribbon>

      <Workspace>
        <Canvas>
          <Page><Caret /></Page>
        </Canvas>
        <ScrollBar>
          <ScrollButton aria-label="Scroll up"><Svg w={5} h={3}><path d="M0 3L2.500 0 5 3z" fill="#666" /></Svg></ScrollButton>
          <Thumb />
          <ScrollButton $down aria-label="Scroll down"><Svg w={5} h={3}><path d="M0 0h5L2.500 3z" fill="#666" /></Svg></ScrollButton>
        </ScrollBar>
      </Workspace>

      <TaskBar>
        <TaskButton aria-label="Start"><WindowsIcon /></TaskButton>
        <TaskButton aria-label="Search"><SearchIcon /></TaskButton>
        <TaskButton aria-label="Task view"><TaskViewIcon /></TaskButton>
        <Pinned>
          <TaskButton aria-label="Edge"><EdgeIcon /></TaskButton>
          <TaskButton $open aria-label="File Explorer"><FolderIcon /></TaskButton>
          <TaskButton aria-label="Store"><StoreIcon /></TaskButton>
          <TaskButton aria-label="Mail"><MailIcon /></TaskButton>
          <TaskButton aria-label="Dropbox"><DropboxIcon /></TaskButton>
          <TaskButton aria-label="Shortcuts"><BoltIcon /></TaskButton>
          <TaskButton aria-label="Paw"><PawIcon /></TaskButton>
          <TaskButton $open aria-label="Chrome"><ChromeIcon /></TaskButton>
          <TaskButton $open aria-label="Steam"><SteamIcon /></TaskButton>
          <TaskButton $open $bg="#6b6b6b" aria-label="Word"><WordIcon /></TaskButton>
          <TaskButton $open $bg="#b8703a" $line="#f56a00" aria-label="Discord"><DiscordIcon /></TaskButton>
          <TaskButton $open aria-label="Game"><BallIcon /></TaskButton>
        </Pinned>
        <Tray>
          <HelpButton $w={18} aria-label="Get help"><HelpIcon /></HelpButton>
          <TrayButton aria-label="Hidden icons"><UpIcon /></TrayButton>
          <TrayButton aria-label="OneDrive"><CloudIcon /></TrayButton>
          <TrayButton aria-label="Microphone"><MicIcon /></TrayButton>
          <TrayButton aria-label="Battery"><BatteryIcon /></TrayButton>
          <TrayButton aria-label="Network"><WifiIcon /></TrayButton>
          <TrayButton aria-label="Volume"><VolumeIcon /></TrayButton>
          <TrayButton $w={25}>ENG</TrayButton>
          <TrayButton $w={41}>12:05 PM</TrayButton>
          <TrayButton $w={27} aria-label="Notifications"><NoticeIcon /></TrayButton>
          <ShowDesktop aria-label="Show desktop" />
        </Tray>
      </TaskBar>
    </Window>
  );
}
